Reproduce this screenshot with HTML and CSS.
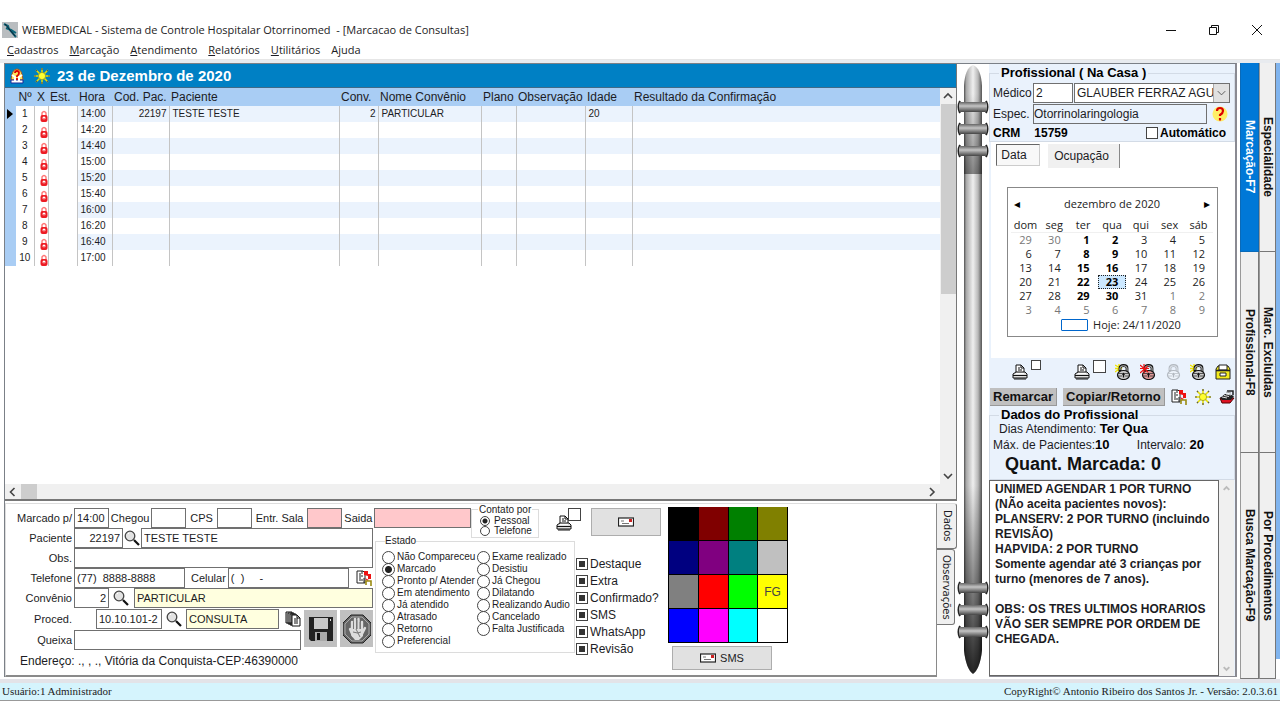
FILE: index.html
```html
<!DOCTYPE html>
<html lang="pt-BR">
<head>
<meta charset="utf-8">
<title>WEBMEDICAL - Marcacao de Consultas</title>
<link rel="stylesheet" href="styles.css">
</head>
<body>
<svg class="defs" aria-hidden="true">
  <defs>
    <linearGradient id="steel" x1="0" x2="1" y1="0" y2="0">
      <stop offset="0" stop-color="#505050"/><stop offset="0.12" stop-color="#a8a8a8"/>
      <stop offset="0.5" stop-color="#efefef"/><stop offset="0.78" stop-color="#b8b8b8"/>
      <stop offset="1" stop-color="#555"/>
    </linearGradient>
    <linearGradient id="ring" x1="0" x2="0" y1="0" y2="1">
      <stop offset="0" stop-color="#666"/><stop offset="0.4" stop-color="#c4c4c4"/><stop offset="1" stop-color="#444"/>
    </linearGradient>
    <linearGradient id="fall" x1="0" x2="0" y1="0" y2="1">
      <stop offset="0" stop-color="#000" stop-opacity="0"/><stop offset="1" stop-color="#000" stop-opacity="0.85"/>
    </linearGradient>
    <linearGradient id="shade" x1="0" x2="0" y1="0" y2="1">
      <stop offset="0" stop-color="#000" stop-opacity="0"/><stop offset="1" stop-color="#000" stop-opacity="0.45"/>
    </linearGradient>
    <symbol id="clamp" viewBox="0 0 32 14">
      <path d="M3 1Q0 7 3 13M29 1Q32 7 29 13" fill="none" stroke="#222" stroke-width="2"/>
      <rect x="2" y="2" width="28" height="10" rx="2" fill="url(#ring)"/>
    </symbol>
    <symbol id="lock" viewBox="0 0 8 12">
      <path d="M2 6V3Q4 0 6 3V6" fill="none" stroke="#f77" stroke-width="1.4"/>
      <rect x="0.5" y="5" width="7" height="7" rx="2" fill="#ed1c24"/>
      <circle cx="4" cy="8" r="1.5" fill="#fff"/><path d="M4 8v2" stroke="#ed1c24"/>
    </symbol>
    <symbol id="sun" viewBox="0 0 16 16">
      <path d="M8 0v16M0 8h16M2 2l12 12M14 2L2 14" stroke="#e8e000" stroke-width="1.5"/>
      <path d="M8 0v2M8 14v2M0 8h2M14 8h2M2 2l1 1M13 13l1 1M14 2l-1 1M2 14l1-1" stroke="#555" stroke-width="1.2"/>
      <circle cx="8" cy="8" r="3.6" fill="#ffff30" stroke="#999920" stroke-width="0.8"/>
    </symbol>
    <symbol id="printer" viewBox="0 0 16 16">
      <path d="M4 9V1h5l3 3v5z" fill="#fff" stroke="#111"/>
      <path d="M6 4h2M6 6h4M9 1v3h3" stroke="#111" fill="none"/>
      <path d="M1 10l3-2h9l2 2v4H1z" fill="#ddd" stroke="#111"/>
      <path d="M1 11.500h14M2 15h12" stroke="#111"/><path d="M4 9.500h8" stroke="#fff"/>
    </symbol>
    <symbol id="lens" viewBox="0 0 16 16">
      <circle cx="6" cy="6" r="4.800" fill="#e2e2e2" stroke="#444" stroke-width="1.300"/>
      <path d="M4 4l1-1" stroke="#fff"/><path d="M10 10l5 5" stroke="#111" stroke-width="2.200"/>
    </symbol>
    <symbol id="mail" viewBox="0 0 16 10">
      <rect x="0.5" y="1" width="15" height="8" fill="#fff" stroke="#222" stroke-width="1.200"/>
      <rect x="11" y="2" width="3" height="3" fill="#c22"/><path d="M3 4h3M4 6.500h7" stroke="#777"/>
    </symbol>
    <symbol id="padlock" viewBox="0 0 16 16">
      <path d="M5 7V4Q5 1.500 8.500 1.500T12 4V8" fill="none" stroke="#111" stroke-width="2.800"/>
      <path d="M5 6V4Q5 1.800 8.500 1.800T12 4V8" fill="none" stroke="#ccc" stroke-width="1"/>
      <ellipse cx="8.500" cy="11" rx="6" ry="4.500" fill="currentColor" stroke="#111" stroke-width="1.200"/>
      <path d="M3 9.500h4M10 9.500h4M3 12h4M10 12h4" stroke="#333" stroke-width="0.800"/>
      <circle cx="8.500" cy="10" r="1.300" fill="#111"/><path d="M8.500 10v3.500" stroke="#111" stroke-width="1.400"/>
    </symbol>
    <symbol id="glow" viewBox="0 0 16 16"><path d="M0 1l7 4M4 0v8M0 8l7-5M0 4.500h6" stroke="#f0e400" stroke-width="1.400"/></symbol>
    <symbol id="burst" viewBox="0 0 16 16"><path d="M0 1l8 7M4 0v9M0 9l8-7M0 4.500h9" stroke="#e11" stroke-width="1.200"/></symbol>
    <symbol id="transfer" viewBox="0 0 16 16">
      <path d="M1 1h6l2 2v10H1z" fill="#fff" stroke="#222"/><path d="M3 4h2M3 6h4M3 8h2M3 10h4M6 1v3" stroke="#222"/>
      <path d="M8 1h4v3h3v5h-3V6L8 5z" fill="#e11"/><path d="M9 8l2 3 2-1z" fill="#e11"/>
      <path d="M10 15v-4h5v5" stroke="#9a8a10" fill="none" stroke-width="1.600"/><path d="M8 8v5" stroke="#222"/>
    </symbol>
  </defs>
</svg>

<header class="titlebar">
  <svg class="i16" viewBox="0 0 16 16"><rect width="16" height="16" fill="#b9bdc0"/><path d="M2 2l4 2 1 3 7 8M4 6l5 2 5 3" stroke="#0b6478" stroke-width="2" fill="none"/><path d="M3 2l10 12" stroke="#123"/></svg>
  <h1>WEBMEDICAL - Sistema de Controle Hospitalar Otorrinomed&nbsp; - [Marcacao de Consultas]</h1>
  <div class="winbtns">
    <button aria-label="Minimizar"><svg viewBox="0 0 12 12"><path d="M1 6.500h10" stroke="#111"/></svg></button>
    <button aria-label="Restaurar"><svg viewBox="0 0 12 12"><path d="M1.500 3.500h7v7h-7zM3.500 3.500v-2h7v7h-2" fill="none" stroke="#111"/></svg></button>
    <button aria-label="Fechar"><svg viewBox="0 0 12 12"><path d="M1 1l10 10M11 1L1 11" stroke="#111"/></svg></button>
  </div>
</header>
<nav class="menubar">
  <button><u>C</u>adastros</button><button><u>M</u>arcação</button><button><u>A</u>tendimento</button><button><u>R</u>elatórios</button><button><u>U</u>tilitários</button><button>Ajuda</button>
</nav>

<main class="work">
  <section class="left">
    <div class="datebar">
      <svg class="i16" viewBox="0 0 16 16"><path d="M2 12Q3 1 8 1t6 11z" fill="#ffe45c" stroke="#a52"/><path d="M2 12h12v3H2z" fill="#fff" stroke="#1a2a9a"/><path d="M3 7l3 2v4M13 7l-3 2v4" stroke="#fff" stroke-width="2" fill="none"/><path d="M6 5q0-2 2-2t2 2-2 3v1M8 10v2" stroke="#d00" stroke-width="1.800" fill="none"/></svg>
      <svg class="i18"><use href="#sun"/></svg>
      <h2>23 de Dezembro de 2020</h2>
    </div>
    <div class="gridbox">
      <div class="gridarea">
        <table class="agenda">
          <colgroup><col class="c-sel"><col class="c-n"><col class="c-x"><col class="c-est"><col class="c-hora"><col class="c-cod"><col class="c-pac"><col class="c-conv"><col class="c-nome"><col class="c-plano"><col class="c-obs"><col class="c-idade"><col></colgroup>
          <thead><tr><th></th><th class="mid">Nº</th><th class="mid">X</th><th>Est.</th><th>Hora</th><th>Cod. Pac.</th><th>Paciente</th><th>Conv.</th><th>Nome Convênio</th><th>Plano</th><th>Observação</th><th>Idade</th><th>Resultado da Confirmação</th></tr></thead>
          <tbody>
            <tr><td><i class="cursor"></i></td><td>1</td><td><svg><use href="#lock"/></svg></td><td></td><td>14:00</td><td class="num">22197</td><td>TESTE TESTE</td><td class="num">2</td><td>PARTICULAR</td><td></td><td></td><td>20</td><td></td></tr>
            <tr><td></td><td>2</td><td><svg><use href="#lock"/></svg></td><td></td><td>14:20</td><td></td><td></td><td></td><td></td><td></td><td></td><td></td><td></td></tr>
            <tr><td></td><td>3</td><td><svg><use href="#lock"/></svg></td><td></td><td>14:40</td><td></td><td></td><td></td><td></td><td></td><td></td><td></td><td></td></tr>
            <tr><td></td><td>4</td><td><svg><use href="#lock"/></svg></td><td></td><td>15:00</td><td></td><td></td><td></td><td></td><td></td><td></td><td></td><td></td></tr>
            <tr><td></td><td>5</td><td><svg><use href="#lock"/></svg></td><td></td><td>15:20</td><td></td><td></td><td></td><td></td><td></td><td></td><td></td><td></td></tr>
            <tr><td></td><td>6</td><td><svg><use href="#lock"/></svg></td><td></td><td>15:40</td><td></td><td></td><td></td><td></td><td></td><td></td><td></td><td></td></tr>
            <tr><td></td><td>7</td><td><svg><use href="#lock"/></svg></td><td></td><td>16:00</td><td></td><td></td><td></td><td></td><td></td><td></td><td></td><td></td></tr>
            <tr><td></td><td>8</td><td><svg><use href="#lock"/></svg></td><td></td><td>16:20</td><td></td><td></td><td></td><td></td><td></td><td></td><td></td><td></td></tr>
            <tr><td></td><td>9</td><td><svg><use href="#lock"/></svg></td><td></td><td>16:40</td><td></td><td></td><td></td><td></td><td></td><td></td><td></td><td></td></tr>
            <tr><td></td><td>10</td><td><svg><use href="#lock"/></svg></td><td></td><td>17:00</td><td></td><td></td><td></td><td></td><td></td><td></td><td></td><td></td></tr>
          </tbody>
        </table>
        <div class="hscroll"><svg viewBox="0 0 16 16"><path d="M9.500 4l-4 4 4 4" /></svg><span class="hthumb"></span><svg class="end" viewBox="0 0 16 16"><path d="M6 4l4 4-4 4"/></svg></div>
      </div>
      <div class="vscroll"><svg viewBox="0 0 16 16"><path d="M4 10l4-4 4 4"/></svg><span class="vthumb"></span><svg class="end" viewBox="0 0 16 16"><path d="M4 6l4 4 4-4"/></svg></div>
    </div>

    <div class="formwrap">
      <div class="form">
        <div class="fields">
          <div class="row top"><label class="lab" for="hora">Marcado p/</label><input id="hora" class="w35" value="14:00"><label for="cheg">Chegou</label><input id="cheg" class="w35"><label class="pad" for="cps">CPS</label><input id="cps" class="w35"><label class="pad" for="sala">Entr. Sala</label><input id="sala" class="w35 pink"><label for="saida">Saida</label><input id="saida" class="w97 pink"></div>
          <div class="row narrow"><label class="lab" for="pac">Paciente</label><input id="pac" class="w48 right" value="22197"><svg class="i16 gapx"><use href="#lens"/></svg><input class="grow" aria-label="Nome do paciente" value="TESTE TESTE"></div>
          <div class="row narrow"><label class="lab" for="obs">Obs.</label><input id="obs" class="grow"></div>
          <div class="row narrow"><label class="lab" for="tel">Telefone</label><input id="tel" class="w110" value="(77)  8888-8888"><label class="cel" for="cel">Celular</label><input id="cel" class="grow" value="(  )     -"><svg class="i16 far"><use href="#transfer"/></svg></div>
          <div class="row narrow"><label class="lab" for="conv">Convênio</label><input id="conv" class="w35 right" value="2"><svg class="i16 gapw"><use href="#lens"/></svg><input class="grow yellow" aria-label="Nome do convênio" value="PARTICULAR"></div>
          <div class="duo narrow">
            <div class="duocol">
              <div class="row"><label class="lab" for="proc">Proced.</label><input id="proc" class="w66 indent" value="10.10.101-2"><svg class="i16 gapp"><use href="#lens"/></svg><input class="grow yellow" aria-label="Procedimento" value="CONSULTA"><svg class="i16 docs" viewBox="0 0 16 16"><path d="M1 1h6v11H1zM3 2h6v11H3zM5 3h6v11H5z" fill="#ccc" stroke="#111"/><path d="M7 4h5l3 3v8H7z" fill="#fff" stroke="#111"/><path d="M9 8h4M9 10h4M9 12h4M12 4v3h3" stroke="#111" fill="none"/></svg></div>
              <div class="row"><label class="lab" for="queixa">Queixa</label><input id="queixa" class="grow"></div>
            </div>
            <button class="tool" aria-label="Salvar"><svg viewBox="0 0 28 28"><path d="M2 2h24v24H4l-2-2z" fill="#222"/><path d="M7 3h14v11H7z" fill="#c9c9c9"/><path d="M8 17h12v9H8z" fill="#aaa"/><path d="M10 18h3v7h-3z" fill="#111"/><path d="M23 4h1v2h-1z" fill="#ddd"/></svg></button>
            <button class="tool" aria-label="Cancelar"><svg viewBox="0 0 28 28"><path d="M8 0h12l8 8v12l-8 8H8l-8-8V8z" fill="#666" stroke="#222"/><path d="M9 2h10l7 7v10l-7 7H9l-7-7V9z" fill="none" stroke="#aaa"/><path d="M9 15V7M12 14V4M15.500 14V4M19 15V7M7 14l3 7M22 13l-3 6" stroke="#ddd" stroke-width="2.400" stroke-linecap="round"/><path d="M8 14h12v7l-4 4h-4l-4-5z" fill="#ddd"/><path d="M10 17q5 2 8 0M13 14l4 8M10.500 14V7M13.800 14V5M17.200 14V7" stroke="#777" fill="none"/></svg></button>
          </div>
          <p class="address"><span class="lab">Endereço:</span> ., , ., Vitória da Conquista-CEP:46390000</p>
        </div>

        <fieldset class="contact"><legend>Contato por</legend>
          <label><input type="radio" name="contato" checked>Pessoal</label><label><input type="radio" name="contato">Telefone</label>
        </fieldset>
        <fieldset class="state"><legend>Estado</legend>
          <div>
            <label><input type="radio" name="estado">Não Compareceu</label><label><input type="radio" name="estado" checked>Marcado</label><label><input type="radio" name="estado">Pronto p/ Atender</label><label><input type="radio" name="estado">Em atendimento</label><label><input type="radio" name="estado">Já atendido</label><label><input type="radio" name="estado">Atrasado</label><label><input type="radio" name="estado">Retorno</label><label><input type="radio" name="estado">Preferencial</label>
          </div>
          <div>
            <label><input type="radio" name="estado">Exame realizado</label><label><input type="radio" name="estado">Desistiu</label><label><input type="radio" name="estado">Já Chegou</label><label><input type="radio" name="estado">Dilatando</label><label><input type="radio" name="estado">Realizando Audio</label><label><input type="radio" name="estado">Cancelado</label><label><input type="radio" name="estado">Falta Justificada</label>
          </div>
        </fieldset>

        <div class="print"><svg class="i16"><use href="#printer"/></svg><input type="checkbox" aria-label="Imprimir"></div>
        <button class="mailbtn" aria-label="Enviar e-mail"><svg class="mail"><use href="#mail"/></svg></button>
        <div class="flags">
          <label><input type="checkbox" class="mixed">Destaque</label><label><input type="checkbox" class="mixed">Extra</label><label><input type="checkbox" class="mixed">Confirmado?</label><label><input type="checkbox" class="mixed">SMS</label><label><input type="checkbox" class="mixed">WhatsApp</label><label><input type="checkbox" class="mixed">Revisão</label>
        </div>
        <div class="colors">
          <div class="palette">
            <button class="k0" aria-label="Preto"></button><button class="k1" aria-label="Bordô"></button><button class="k2" aria-label="Verde"></button><button class="k3" aria-label="Oliva"></button>
            <button class="k4" aria-label="Marinho"></button><button class="k5" aria-label="Roxo"></button><button class="k6" aria-label="Petróleo"></button><button class="k7" aria-label="Prata"></button>
            <button class="k8" aria-label="Cinza"></button><button class="k9" aria-label="Vermelho"></button><button class="k10" aria-label="Lima"></button><button class="k11">FG</button>
            <button class="k12" aria-label="Azul"></button><button class="k13" aria-label="Magenta"></button><button class="k14" aria-label="Ciano"></button><button class="k15" aria-label="Branco"></button>
          </div>
          <button class="sms"><svg class="mail"><use href="#mail"/></svg>SMS</button>
        </div>
      </div>
      <div class="sidetabs"><button class="on">Dados</button><button>Observações</button></div>
    </div>
  </section>

  <div class="pipe" aria-hidden="true">
    <svg class="cap" viewBox="0 0 32 110"><path d="M7 110V22Q8 4 16 1Q24 4 25 22V110z" fill="url(#steel)"/><path d="M7 30h18v80H7z" fill="url(#shade)"/><use href="#clamp" y="36" width="32" height="14"/><use href="#clamp" y="58" width="32" height="14"/><use href="#clamp" y="80" width="32" height="14"/></svg>
    <div class="shaft"></div>
    <svg class="foot" viewBox="0 0 32 190"><path d="M7 0V165Q9 184 16 189Q23 184 25 165V0z" fill="url(#steel)"/><path d="M7 0V165Q9 184 16 189Q23 184 25 165V0z" fill="url(#fall)"/><use href="#clamp" y="96" width="32" height="14"/><use href="#clamp" y="118" width="32" height="14"/><use href="#clamp" y="140" width="32" height="14"/></svg>
  </div>

  <aside class="panel">
    <fieldset class="prof"><legend>Profissional ( Na Casa )</legend>
      <div class="prow"><label for="med">Médico</label><input id="med" class="w40" value="2"><div class="combo"><select aria-label="Nome do médico"><option>GLAUBER FERRAZ AGU</option></select><svg viewBox="0 0 16 18"><path d="M4 7l4 4 4-4"/></svg></div></div>
      <div class="prow"><label for="esp">Espec.</label><input id="esp" class="esp" value="Otorrinolaringologia"><svg class="i16 help" viewBox="0 0 16 16"><circle cx="8" cy="8" r="7.500" fill="#ffee66"/><path d="M5 5q0-3 3-3t3 3q0 2-3 4v1M8 12v2.500" fill="none" stroke="#d00" stroke-width="2.200"/></svg></div>
      <div class="prow crm"><b>CRM</b><b class="crmno">15759</b><label class="auto"><input type="checkbox">Automático</label></div>
    </fieldset>
    <div class="minitabs"><button class="sel">Data</button><button>Ocupação</button></div>
    <div class="calbox">
      <div class="cal">
        <div class="calhead"><button aria-label="Mês anterior">◂</button><span>dezembro de 2020</span><button aria-label="Próximo mês">▸</button></div>
        <table>
          <thead><tr><th>dom</th><th>seg</th><th>ter</th><th>qua</th><th>qui</th><th>sex</th><th>sáb</th></tr></thead>
          <tbody>
            <tr><td class="out">29</td><td class="out">30</td><td><b>1</b></td><td><b>2</b></td><td>3</td><td>4</td><td>5</td></tr>
            <tr><td>6</td><td>7</td><td><b>8</b></td><td><b>9</b></td><td>10</td><td>11</td><td>12</td></tr>
            <tr><td>13</td><td>14</td><td><b>15</b></td><td><b>16</b></td><td>17</td><td>18</td><td>19</td></tr>
            <tr><td>20</td><td>21</td><td><b>22</b></td><td class="day"><b>23</b></td><td>24</td><td>25</td><td>26</td></tr>
            <tr><td>27</td><td>28</td><td><b>29</b></td><td><b>30</b></td><td>31</td><td class="out">1</td><td class="out">2</td></tr>
            <tr><td class="out">3</td><td class="out">4</td><td class="out">5</td><td class="out">6</td><td class="out">7</td><td class="out">8</td><td class="out">9</td></tr>
          </tbody>
        </table>
        <div class="today"><i></i>Hoje: 24/11/2020</div>
      </div>
    </div>
    <div class="icons">
      <span class="pr"><svg class="i16"><use href="#printer"/></svg><input type="checkbox" class="small" aria-label="Imprimir lista"></span>
      <span class="pr wide"><svg class="i16"><use href="#printer"/></svg><input type="checkbox" aria-label="Imprimir agenda"></span>
      <svg class="i16 gray"><use href="#glow"/><use href="#padlock"/></svg><svg class="i16 red"><use href="#padlock"/><use href="#burst"/></svg><svg class="i16 faded"><use href="#padlock"/></svg><svg class="i16 gray"><use href="#glow"/><use href="#padlock"/></svg>
      <svg class="i16" viewBox="0 0 16 16"><path d="M1 5l2-3h10l2 3v10H1z" fill="#f3ea1c" stroke="#222"/><path d="M4 1h8v5H4z" fill="#fff" stroke="#222"/><path d="M1 6.500h14" stroke="#222" stroke-width="1.600"/><path d="M5 9h6v3H5z" fill="#fff" stroke="#222"/></svg>
    </div>
    <div class="actions"><button>Remarcar</button><button>Copiar/Retorno</button>
      <svg class="i16"><use href="#transfer"/></svg><svg class="i16"><use href="#sun"/></svg><svg class="i16" viewBox="0 0 16 16"><path d="M1 9l2 5h8l4-5z" fill="#d12" stroke="#500"/><path d="M1 9l5-4h4l5 2-3 4H3z" fill="#222"/><path d="M3 8l5 1M5 6.500l5 1M7 5l5 1" stroke="#ddd"/><path d="M8 2h6v4" fill="none" stroke="#222" stroke-width="1.500"/><path d="M7 3l5 1" stroke="#999"/></svg></div>
    <fieldset class="info"><legend>Dados do Profissional</legend>
      <p class="i1">Dias Atendimento: <b>Ter Qua</b></p>
      <p class="i2"><span>Máx. de Pacientes:<b>10</b></span><span>Intervalo: <b>20</b></span></p>
      <p class="quant">Quant. Marcada: 0</p>
    </fieldset>
    <div class="memo"><textarea aria-label="Observações do profissional">UNIMED AGENDAR 1 POR TURNO (NÃo aceita pacientes novos):
PLANSERV: 2 POR TURNO (incluindo REVISÃO)
HAPVIDA: 2 POR TURNO
Somente agendar até 3 crianças por turno (menores de 7 anos).

OBS: OS TRES ULTIMOS HORARIOS VÃO SER SEMPRE POR ORDEM DE CHEGADA.</textarea><div class="memoscroll"><svg viewBox="0 0 16 16"><path d="M5 10l3-3 3 3"/></svg><svg viewBox="0 0 16 16"><path d="M5 7l3 3 3-3"/></svg></div></div>
  </aside>

  <nav class="tabs one"><button class="on">Marcação-F7</button><button>Profissional-F8</button><button>Busca Marcação-F9</button></nav>
  <nav class="tabs two"><button>Especialidade</button><button>Marc. Excluidas</button><button>Por Procedimentos</button></nav>
  <div class="edge"></div>
</main>
<footer class="status"><span>Usuário:1 Administrador</span><span>CopyRight© Antonio Ribeiro dos Santos Jr. - Versão: 2.0.3.61</span></footer>
</body>
</html>
```
FILE: styles.css
```css
* { box-sizing: border-box; }
body {
  margin: 0;
  min-height: 100vh;
  padding: 18px 0 19px;
  display: flex;
  flex-direction: column;
  background: #fff;
  color: #1c1c24;
  font: 11px/14px "Liberation Sans", Arial, sans-serif;
}
button, input, select, textarea { font: inherit; color: inherit; margin: 0; border-radius: 0; }
button { padding: 0; border: 0; background: none; }
h1, h2, p { margin: 0; font-weight: normal; }
table { border-collapse: collapse; }
fieldset { margin: 0; padding: 0; border: 1px solid #dcdcdc; min-width: 0; }
svg { display: block; flex: none; }
.defs { position: absolute; width: 0; height: 0; }
.i16 { width: 16px; height: 16px; }
.i18 { width: 18px; height: 16px; }

.titlebar { display: flex; align-items: center; height: 23px; padding-left: 2px; gap: 4px; }
.titlebar h1 { flex: 1; font: 11px/18px "Open Sans", "Noto Sans", sans-serif; }
.winbtns { display: flex; padding-right: 2px; }
.winbtns button { width: 43px; height: 22px; display: grid; place-items: center; }
.winbtns svg { width: 12px; height: 12px; }
.menubar { display: flex; gap: 11px; height: 19px; padding-left: 7px; border-bottom: 1px solid #e6e6e6; font: 11px/18px "Open Sans", "Noto Sans", sans-serif; }

.work { flex: 1; display: flex; border-top: 3px solid #e8ebef; border-bottom: 4px solid #e3e3e8; padding-left: 4px; background: #fff; }
.left { flex: 1; min-width: 0; display: flex; flex-direction: column; border-left: 1px solid #7b8087; border-top: 1px solid #7b8087; margin-bottom: 2px; }
.datebar { display: flex; align-items: center; height: 24px; padding-left: 4px; background: #0080c4; color: #fff; border-bottom: 1px solid #406a88; border-right: 1px solid #777; }
.datebar .i18 { margin-left: 8px; }
.datebar h2 { margin-left: 6px; font-weight: bold; font-size: 15px; line-height: 20px; }
.gridbox { flex: 1; display: flex; border-right: 1px solid #777; border-bottom: 2px solid #777; }
.gridarea { flex: 1; min-width: 0; display: flex; flex-direction: column; }
.agenda { width: 100%; table-layout: fixed; font-size: 10px; }
.agenda th { background: #a9cdf4; height: 18px; padding: 0 0 0 2px; text-align: left; font-weight: normal; font-size: 12px; line-height: 16px; white-space: nowrap; }
.agenda th.mid { text-align: center; padding: 0; }
.agenda td { height: 16px; padding: 0 2px 0 3px; line-height: 14px; border-right: 1px solid #c4c4c4; }
.agenda td:first-child { background: #a9cdf4; padding: 0 0 0 2px; border: 0; }
.agenda td:nth-child(2) { padding: 0; text-align: center; background: #fff; }
.agenda td:nth-child(3) { padding: 0 0 0 5px; background: #fff; }
.agenda td:nth-child(3) svg { width: 8px; height: 12px; margin-top: 3px; }
.agenda td:nth-child(4) { background: #fff; }
.agenda td:last-child { border: 0; }
.agenda td.num { text-align: right; }
.agenda tbody tr:nth-child(odd) { background: #ebf3fd; }
.cursor { display: block; border-left: 6px solid #000; border-top: 5px solid transparent; border-bottom: 5px solid transparent; width: 0; }
.c-sel { width: 11px; } .c-n { width: 18px; } .c-x { width: 14px; } .c-est { width: 29px; }
.c-hora { width: 35px; } .c-cod { width: 57px; } .c-pac { width: 170px; } .c-conv { width: 39px; }
.c-nome { width: 103px; } .c-plano { width: 35px; } .c-obs { width: 69px; } .c-idade { width: 47px; }
.hscroll { margin-top: auto; display: flex; height: 15px; background: #f0f0f0; }
.hscroll svg, .vscroll svg { width: 16px; height: 16px; }
.hscroll path, .vscroll path { fill: none; stroke: #444; stroke-width: 1.6; }
.hthumb { width: 16px; background: #cdcdcd; }
.hscroll .end { margin-left: auto; }
.vscroll { width: 16px; padding-bottom: 15px; background: #f0f0f0; display: flex; flex-direction: column; }
.vthumb { flex: 1; max-height: 190px; background: #cdcdcd; margin-left: 1px; }
.vscroll .end { margin-top: auto; }

.formwrap { display: flex; padding-top: 2px; }
.form { flex: 1; display: grid; grid-template-columns: 368px 97px 101px 13px 77px 6px 121px; grid-template-rows: 30px auto; border: 1px solid #8a8a8a; border-top-color: #ddd; border-left-color: #ddd; border-bottom-width: 2px; height: 174px; align-content: start; }
.fields { grid-column: 1 / 3; grid-row: 1 / 3; padding-top: 4px; display: flex; flex-direction: column; font-size: 12px; }
.row { display: flex; align-items: center; height: 20px; white-space: pre; }
.narrow { width: 367px; }
.lab { width: 66px; text-align: right; margin-right: 2px; flex: none; }
.row label { font-size: 11px; }
.row label:not(.lab) { padding: 0 2px; }
.row label.pad { padding: 0 4px; }
.row label.cel { padding: 0 2px 0 6px; }
.row input { height: 20px; min-width: 0; border: 1px solid #707070; padding: 0 2px; background: #fff; font-size: 11px; }
.row input.right { text-align: right; }
.row .grow { flex: 1; }
.w35 { width: 35px; } .w48 { width: 49px; } .w66 { width: 66px; } .w97 { width: 97px; } .w110 { width: 111px; } .w40 { width: 40px; }
.row input.pink { background: #ffc8cb; }
.row input.yellow { background: #ffffdf; }
.gapx { margin: 0 1px; } .gapw { margin: 0 5px 0 4px; } .gapp { margin: 0 4px; }
.far { margin: 0 1px 0 7px; } .docs { margin: 0 0 0 6px; }
.row input.indent { margin-left: 22px; }
.duo { display: flex; gap: 3px; }
.duocol { flex: 1; min-width: 0; display: flex; flex-direction: column; gap: 1px; padding-top: 1px; }
.tool { width: 33px; height: 37px; margin-top: 2px; background: #c0c0c0; display: grid; place-items: center; }
.tool svg { width: 28px; height: 30px; }
.address { line-height: 22px; font-size: 12px; white-space: pre; padding-left: 14px; }
.address .lab { margin: 0; }

input[type="radio"], input[type="checkbox"] { appearance: none; flex: none; width: 13px; height: 13px; border: 1px solid #444; background: #fff; }
input[type="radio"] { border-radius: 50%; }
input[type="radio"]:checked { background: radial-gradient(circle, #222 0 3px, #fff 4px); }
.contact { grid-column: 3; grid-row: 1; justify-self: start; width: 68px; height: 33px; margin: 1px 0 0 0; font-size: 10px; }
.contact legend { margin-left: 6px; padding: 0 1px; line-height: 9px; height: 9px; }
.contact label { display: flex; align-items: center; gap: 4px; height: 10px; padding-left: 8px; line-height: 10px; }
.contact label:first-of-type { margin-top: 2px; }
.contact input[type="radio"] { width: 10px; height: 10px; }
.contact input[type="radio"]:checked { background: radial-gradient(circle, #222 0 2px, #fff 3px); }
.state { grid-column: 2 / 4; grid-row: 2; align-self: start; margin: 1px 0 0 1px; width: 200px; height: 118px; display: grid; grid-template-columns: 95px auto; padding-left: 6px; font-size: 10px; }
.state legend { margin-left: 3px; padding: 0; line-height: 12px; }
.state label { display: flex; align-items: center; height: 12px; line-height: 12px; gap: 2px; white-space: nowrap; }
.state > div { padding-top: 4px; }
.print { grid-column: 3 / 6; grid-row: 1; justify-self: start; margin: 4px 0 0 85px; display: flex; }
.print .i16 { margin-top: 7px; }
.print input { margin-left: -4px; }
.mailbtn { grid-column: 5; grid-row: 1; justify-self: start; margin: 4px 0 0 6px; width: 70px; height: 28px; background: #e1e1e1; border: 1px solid #adadad; display: grid; place-items: center; }
.mail { width: 16px; height: 10px; }
.flags { grid-column: 4 / 6; grid-row: 2; display: flex; flex-direction: column; padding: 21px 0 0 4px; font-size: 12px; }
.flags label { display: flex; align-items: center; height: 17px; gap: 2px; }
.flags input { width: 12px; height: 12px; background: #fff; box-shadow: inset 0 0 0 2px #fff, inset 0 0 0 8px #333; }
.colors { grid-column: 7; grid-row: 1 / 3; padding-top: 3px; }
.palette { display: grid; grid-template-columns: repeat(4, 1fr); grid-auto-rows: 33px; gap: 1px; padding: 0 1px; background: #000; width: 120px; border-bottom: 1px solid #000; }
.palette button { color: #444; font-size: 12px; }
.k0 { background: #000; } .k1 { background: #800000; } .k2 { background: #008000; } .k3 { background: #808000; }
.k4 { background: #000080; } .k5 { background: #800080; } .k6 { background: #008080; } .k7 { background: #c0c0c0; }
.k8 { background: #808080; } .k9 { background: #f00; } .k10 { background: #0f0; } .k11 { background: #ff0; }
.k12 { background: #00f; } .k13 { background: #f0f; } .k14 { background: #0ff; } .k15 { background: #fff; }
.sms { margin: 3px 0 0 4px; width: 100px; height: 24px; background: #e1e1e1; border: 1px solid #adadad; display: flex; align-items: center; justify-content: center; gap: 4px; font-size: 11px; }
.sidetabs { width: 20px; display: flex; flex-direction: column; }
.sidetabs button { writing-mode: vertical-rl; width: 18px; height: 76px; border: 1px solid #777; border-left: 0; background: #f0f0f0; font-family: "DejaVu Sans", sans-serif; font-size: 10px; border-radius: 0 3px 3px 0; }
.sidetabs button.on { width: 20px; height: 46px; border-top-color: #ddd; }

.pipe { width: 32px; display: flex; flex-direction: column; border-top: 1px solid #7b8087; padding-bottom: 4px; }
.cap { width: 32px; height: 110px; }
.foot { width: 32px; height: 190px; }
.shaft { flex: 1; margin: 0 7px; background: linear-gradient(90deg, #505050, #a8a8a8 12%, #efefef 50%, #b8b8b8 78%, #555); }

.panel { width: 248px; display: flex; flex-direction: column; background: #eaf2fc; border-right: 2px solid #8a8a92; border-top: 1px solid #7b8087; border-bottom: 1px solid #8a8a92; margin-bottom: 2px; font-size: 12px; }
.panel fieldset { border-color: #d3dbe6; }
.panel legend { margin-left: 9px; padding: 0 2px; font-weight: bold; font-size: 13px; line-height: 14px; color: #000; }
.prof { margin-top: 2px; height: 76px; }
.prow { display: flex; align-items: center; height: 21px; }
.prow:first-of-type { margin-top: 2px; }
.prow > label:first-child { width: 43px; padding-left: 3px; }
.prow input:not([type]), .combo select { height: 20px; border: 1px solid #707070; padding: 0 2px; background: #fff; }
.prow input.esp { width: 174px; background: #eaf2fc; font-size: 12px; padding: 0; }
.help { margin-left: 5px; }
.combo { position: relative; width: 156px; margin-left: 1px; }
.combo select { display: block; appearance: none; width: 156px; padding: 0 16px 0 2px; overflow: hidden; text-overflow: clip; }
.combo svg { position: absolute; right: 1px; top: 1px; width: 16px; height: 18px; background: #e1e1e1; pointer-events: none; border-left: 1px solid #aaa; }
.combo path { fill: none; stroke: #555; }
.prow.crm { height: 17px; color: #000; padding-left: 3px; }
.crmno { margin-left: 14px; }
.auto { margin-left: auto; font-weight: bold; display: flex; align-items: center; gap: 2px; padding-right: 8px; font-size: 12px; }
.auto input { width: 12px; height: 12px; }
.minitabs { display: flex; gap: 8px; padding: 2px 0 0 5px; background: #fff; border-left: 2px solid #eaf2fc; height: 27px; }
.minitabs button { height: 24px; width: 72px; background: #f0f0f0; border-right: 1px solid #888; padding-right: 4px; }
.minitabs .sel { width: 44px; height: 22px; background: #f8f8f8; border: 1px solid #666; border-right-color: #ccc; border-bottom-color: #ccc; padding-right: 8px; }
.calbox { background: #fff; height: 189px; padding: 18px 17px 0 16px; border-left: 2px solid #eaf2fc; }
.cal { border: 1px solid #888; height: 150px; padding: 8px 4px 0 3px; font: 11px/14px "Open Sans", "Noto Sans", sans-serif; color: #222; }
.calhead { display: flex; justify-content: space-between; padding: 0 3px; line-height: 15px; }
.calhead button { font: 12px/14px "DejaVu Sans", sans-serif; color: #000; }
.cal table { width: 100%; table-layout: fixed; margin-top: 7px; }
.cal th { font-weight: normal; height: 14px; padding: 0; line-height: 14px; border-bottom: 1px solid #f0f0f0; }
.cal td { height: 14px; padding: 0 8px 0 0; text-align: right; line-height: 14px; }
.cal .out { color: #777; }
.cal b { color: #000; }
.cal .day { background: #cce8ff; outline: 1px dotted #222; outline-offset: -1px; }
.today { display: flex; align-items: center; justify-content: center; gap: 5px; line-height: 16px; padding-left: 18px; }
.today i { width: 27px; height: 12px; border: 1px solid #0066cc; border-radius: 1px; }
.icons { display: flex; align-items: center; gap: 9px; height: 28px; padding-left: 23px; }
.pr { display: flex; width: 53px; }
.pr input { margin: -4px 0 0 3px; }
.pr.wide { width: 32px; }
.pr input.small { width: 10px; height: 10px; }
.gray { color: #ccc; } .red { color: #e09a9a; } .faded { color: #fff; opacity: 0.25; }
.actions { display: flex; align-items: center; height: 22px; gap: 8px; padding-left: 1px; }
.actions button { height: 18px; padding: 0 3px; background: #c0c0c0; font-weight: bold; font-size: 13px; line-height: 16px; border-right: 1px solid #999; border-bottom: 1px solid #999; color: #111; margin-right: -2px; }
.actions .i16:first-of-type { margin-left: auto; }
.actions .i16:last-child { margin-right: 5px; }
.info { height: 72px; line-height: 14px; }
.info b { color: #000; font-weight: bold; font-size: 13px; }
.info .i1 { padding-left: 9px; }
.info .i2 { display: flex; justify-content: space-between; padding: 0 30px 0 3px; line-height: 18px; }
.info .quant { font-weight: bold; font-size: 18px; line-height: 20px; color: #111; padding-left: 15px; }
.memo { flex: 1; display: flex; margin-right: 1px; }
.memo textarea { flex: 1; min-width: 0; resize: none; overflow: hidden; border: 1px solid #666; padding: 1px 0 1px 5px; font-weight: bold; line-height: 15px; background: #fff; }
.memoscroll { width: 15px; background: #f0f0f0; display: flex; flex-direction: column; justify-content: space-between; }
.memoscroll svg { width: 15px; height: 16px; }
.memoscroll path { fill: none; stroke: #bbb; stroke-width: 2; }

.tabs { display: flex; flex-direction: column; width: 19px; font-weight: bold; font-size: 12px; }
.tabs.one { margin-left: 3px; }
.tabs.two { width: 17px; }
.tabs button { writing-mode: vertical-rl; flex: 201; background: #f0f0f0; color: #111; border: 1px solid #777; border-left-color: #999; border-top: 0; font-weight: bold; display: flex; align-items: center; justify-content: center; line-height: 16px; }
.tabs button:first-child { flex: 189; }
.tabs button:last-child { flex: 226; }
.tabs .on { background: #0078d7; color: #fff; border-color: #0a6ab8; }
.edge { width: 4px; background: #80b4ee; margin-bottom: 20px; }
.status { display: flex; justify-content: space-between; height: 18px; padding: 0 2px; background: #d5f4fd; border-bottom: 1px solid #999; font: 11px/17px "Liberation Serif", "Times New Roman", serif; color: #222; }
```
